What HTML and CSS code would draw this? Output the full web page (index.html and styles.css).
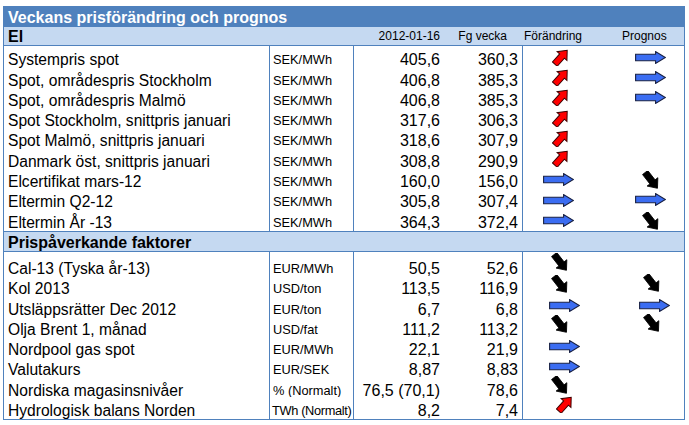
FILE: index.html
```html
<!DOCTYPE html>
<html lang="sv">
<head>
<meta charset="utf-8">
<title>Veckans prisförändring och prognos</title>
<link rel="stylesheet" href="styles.css">
</head>
<body>
<svg class="defs" width="0" height="0" aria-hidden="true">
  <defs>
    <symbol id="a-right" viewBox="0 0 31 13">
      <path d="M0.6 3.3 H20.6 V0.6 L30.3 6.5 L20.6 12.4 V9.7 H0.6 Z" fill="#3b6df2" stroke="#1a2244" stroke-width="1.1" stroke-linejoin="miter"/>
    </symbol>
    <symbol id="a-up" viewBox="0 0 17 17">
      <g transform="translate(8.5 8.8) rotate(42)">
        <path d="M0 -10 L6.6 -2.3 L3.2 -2.3 L3.2 8.5 L-3.2 8.5 L-3.2 -2.3 L-6.6 -2.3 Z" fill="#ff0000" stroke="#3a0000" stroke-width="1"/>
      </g>
    </symbol>
    <symbol id="a-down" viewBox="0 0 20 19">
      <g transform="translate(10 9) rotate(-38)">
        <path d="M0 10.5 L6.8 2.4 L3.3 2.4 L3.3 -9.5 L-3.3 -9.5 L-3.3 2.4 L-6.8 2.4 Z" fill="#000" stroke="#000" stroke-width="0.8"/>
      </g>
    </symbol>
  </defs>
</svg>

<div class="sheet">
  <div class="title">Veckans prisförändring och prognos</div>

  <div class="section-head el-head">
    <div class="sh-label">El</div>
    <div></div>
    <div class="ch ch-date">2012-01-16</div>
    <div class="ch ch-prev">Fg vecka</div>
    <div class="ch ch-chg">Förändring</div>
    <div class="ch ch-prog">Prognos</div>
  </div>

  <div class="body sec-el">
    <div class="row">
      <div class="cell label">Systempris spot</div>
      <div class="cell unit">SEK/MWh</div>
      <div class="cell num">405,6</div>
      <div class="cell num prev">360,3</div>
      <div class="cell arr chg"><svg class="up"><use href="#a-up"/></svg></div>
      <div class="cell arr prog"><svg class="right"><use href="#a-right"/></svg></div>
    </div>
    <div class="row">
      <div class="cell label">Spot, områdespris Stockholm</div>
      <div class="cell unit">SEK/MWh</div>
      <div class="cell num">406,8</div>
      <div class="cell num prev">385,3</div>
      <div class="cell arr chg"><svg class="up"><use href="#a-up"/></svg></div>
      <div class="cell arr prog"><svg class="right"><use href="#a-right"/></svg></div>
    </div>
    <div class="row">
      <div class="cell label">Spot, områdespris Malmö</div>
      <div class="cell unit">SEK/MWh</div>
      <div class="cell num">406,8</div>
      <div class="cell num prev">385,3</div>
      <div class="cell arr chg"><svg class="up"><use href="#a-up"/></svg></div>
      <div class="cell arr prog"><svg class="right"><use href="#a-right"/></svg></div>
    </div>
    <div class="row">
      <div class="cell label">Spot Stockholm, snittpris januari</div>
      <div class="cell unit">SEK/MWh</div>
      <div class="cell num">317,6</div>
      <div class="cell num prev">306,3</div>
      <div class="cell arr chg"><svg class="up"><use href="#a-up"/></svg></div>
      <div class="cell arr prog"></div>
    </div>
    <div class="row">
      <div class="cell label">Spot Malmö, snittpris januari</div>
      <div class="cell unit">SEK/MWh</div>
      <div class="cell num">318,6</div>
      <div class="cell num prev">307,9</div>
      <div class="cell arr chg"><svg class="up"><use href="#a-up"/></svg></div>
      <div class="cell arr prog"></div>
    </div>
    <div class="row">
      <div class="cell label">Danmark öst, snittpris januari</div>
      <div class="cell unit">SEK/MWh</div>
      <div class="cell num">308,8</div>
      <div class="cell num prev">290,9</div>
      <div class="cell arr chg"><svg class="up"><use href="#a-up"/></svg></div>
      <div class="cell arr prog"></div>
    </div>
    <div class="row">
      <div class="cell label">Elcertifikat mars-12</div>
      <div class="cell unit">SEK/MWh</div>
      <div class="cell num">160,0</div>
      <div class="cell num prev">156,0</div>
      <div class="cell arr chg"><svg class="right"><use href="#a-right"/></svg></div>
      <div class="cell arr prog"><svg class="down"><use href="#a-down"/></svg></div>
    </div>
    <div class="row">
      <div class="cell label">Eltermin Q2-12</div>
      <div class="cell unit">SEK/MWh</div>
      <div class="cell num">305,8</div>
      <div class="cell num prev">307,4</div>
      <div class="cell arr chg"><svg class="right"><use href="#a-right"/></svg></div>
      <div class="cell arr prog"><svg class="right"><use href="#a-right"/></svg></div>
    </div>
    <div class="row last">
      <div class="cell label">Eltermin År -13</div>
      <div class="cell unit">SEK/MWh</div>
      <div class="cell num">364,3</div>
      <div class="cell num prev">372,4</div>
      <div class="cell arr chg"><svg class="right"><use href="#a-right"/></svg></div>
      <div class="cell arr prog"><svg class="down"><use href="#a-down"/></svg></div>
    </div>
  </div>

  <div class="section-head fx-head">
    <div class="sh-label">Prispåverkande faktorer</div>
  </div>

  <div class="body sec-fx">
    <div class="row first">
      <div class="cell label">Cal-13 (Tyska år-13)</div>
      <div class="cell unit">EUR/MWh</div>
      <div class="cell num">50,5</div>
      <div class="cell num prev">52,6</div>
      <div class="cell arr chg"><svg class="down"><use href="#a-down"/></svg></div>
      <div class="cell arr prog"></div>
    </div>
    <div class="row">
      <div class="cell label">Kol 2013</div>
      <div class="cell unit">USD/ton</div>
      <div class="cell num">113,5</div>
      <div class="cell num prev">116,9</div>
      <div class="cell arr chg"><svg class="down"><use href="#a-down"/></svg></div>
      <div class="cell arr prog"><svg class="down"><use href="#a-down"/></svg></div>
    </div>
    <div class="row">
      <div class="cell label">Utsläppsrätter Dec 2012</div>
      <div class="cell unit">EUR/ton</div>
      <div class="cell num">6,7</div>
      <div class="cell num prev">6,8</div>
      <div class="cell arr chg"><svg class="right"><use href="#a-right"/></svg></div>
      <div class="cell arr prog"><svg class="right"><use href="#a-right"/></svg></div>
    </div>
    <div class="row">
      <div class="cell label">Olja Brent 1, månad</div>
      <div class="cell unit">USD/fat</div>
      <div class="cell num">111,2</div>
      <div class="cell num prev">113,2</div>
      <div class="cell arr chg"><svg class="down"><use href="#a-down"/></svg></div>
      <div class="cell arr prog"><svg class="down"><use href="#a-down"/></svg></div>
    </div>
    <div class="row">
      <div class="cell label">Nordpool gas spot</div>
      <div class="cell unit">EUR/MWh</div>
      <div class="cell num">22,1</div>
      <div class="cell num prev">21,9</div>
      <div class="cell arr chg"><svg class="right"><use href="#a-right"/></svg></div>
      <div class="cell arr prog"></div>
    </div>
    <div class="row">
      <div class="cell label">Valutakurs</div>
      <div class="cell unit">EUR/SEK</div>
      <div class="cell num">8,87</div>
      <div class="cell num prev">8,83</div>
      <div class="cell arr chg"><svg class="right"><use href="#a-right"/></svg></div>
      <div class="cell arr prog"></div>
    </div>
    <div class="row">
      <div class="cell label">Nordiska magasinsnivåer</div>
      <div class="cell unit">% (Normalt)</div>
      <div class="cell num">76,5 (70,1)</div>
      <div class="cell num prev">78,6</div>
      <div class="cell arr chg"><svg class="down"><use href="#a-down"/></svg></div>
      <div class="cell arr prog"></div>
    </div>
    <div class="row last">
      <div class="cell label">Hydrologisk balans Norden</div>
      <div class="cell unit tight">TWh (Normalt)</div>
      <div class="cell num">8,2</div>
      <div class="cell num prev">7,4</div>
      <div class="cell arr chg"><svg class="up hydro"><use href="#a-up"/></svg></div>
      <div class="cell arr prog"></div>
    </div>
  </div>
</div>
</body>
</html>
```

FILE: styles.css
```css
* { box-sizing: border-box; }

html, body {
  margin: 0;
  padding: 0;
  background: #ffffff;
}

body {
  font-family: "Liberation Sans", Arial, sans-serif;
  color: #000;
}

.defs {
  position: absolute;
  width: 0;
  height: 0;
  overflow: hidden;
}

.sheet {
  margin: 6px 0 0 3px;
  width: 682px;
}

.title {
  height: 21px;
  background: #4f81bd;
  color: #ffffff;
  font-weight: bold;
  font-size: 16px;
  line-height: 20px;
  padding: 2px 0 0 5px;
  white-space: nowrap;
}

.section-head {
  display: grid;
  grid-template-columns: 266px 84px 90px 79px 81px 80px;
  background: #c5d9f1;
  border-left: 1px solid #4f81bd;
  border-right: 1px solid #4f81bd;
  border-bottom: 1px solid #4f81bd;
}

.el-head {
  height: 19px;
}

.fx-head {
  height: 21px;
  border-top: 1px solid #4f81bd;
  grid-template-columns: 1fr;
}

.sh-label {
  font-weight: bold;
  font-size: 16px;
  padding-left: 4px;
  white-space: nowrap;
}

.el-head .sh-label {
  line-height: 20px;
}

.fx-head .sh-label {
  line-height: 22px;
}

.ch {
  font-size: 12px;
  line-height: 19px;
  white-space: nowrap;
}

.ch-date { text-align: right; padding-right: 4px; }
.ch-prev { text-align: right; padding-right: 16px; }
.ch-chg { padding-left: 1px; }
.ch-prog { padding-left: 18px; }

.body {
  border-left: 1px solid #4f81bd;
  border-right: 1px solid #4f81bd;
}

.sec-fx {
  border-bottom: 1px solid #4f81bd;
}

.row {
  display: grid;
  grid-template-columns: 266px 84px 90px 79px 81px 80px;
  height: 20.3px;
}

.row.first {
  height: 23.3px;
}

.row.last {
  height: 22.3px;
}

.row.last .cell {
  padding-bottom: 2px;
}

.cell {
  display: flex;
  align-items: flex-end;
  line-height: 12px;
  white-space: nowrap;
  overflow: visible;
}

.label {
  font-size: 15.6px;
  padding-left: 4px;
  border-right: 1px solid #4f81bd;
}

.unit {
  font-size: 12.8px;
  padding-left: 3px;
  border-right: 1px solid #4f81bd;
  overflow: hidden;
}

.unit.tight {
  letter-spacing: -0.35px;
  padding-left: 2px;
}

.num {
  font-size: 16px;
  justify-content: flex-end;
  padding-right: 4px;
}

.prev {
  border-right: 1px solid #4f81bd;
}

.arr {
  align-items: center;
}

.arr svg {
  display: block;
  flex: none;
}

svg.right { width: 31px; height: 13px; }
svg.up { width: 17px; height: 17px; }
svg.down { width: 20px; height: 19px; }

/* El section: arrows sit a little lower in the row */
.sec-el .chg .up { margin-left: 29px; transform: translateY(1px); }
.sec-el .chg .right { margin-left: 20px; transform: translateY(2px); }
.sec-el .prog .right { margin-left: 31px; transform: translateY(1px); }
.sec-el .prog .down { margin-left: 37px; transform: translateY(3px); }

/* Factors section */
.sec-fx .chg .down { margin-left: 27px; transform: translateY(-1px); }
.sec-fx .chg .right { margin-left: 26px; }
.sec-fx .chg .up { margin-left: 33px; transform: translateY(-2px); }
.sec-fx .prog .down { margin-left: 38px; transform: translateY(-2px); }
.sec-fx .prog .right { margin-left: 35px; }
```
